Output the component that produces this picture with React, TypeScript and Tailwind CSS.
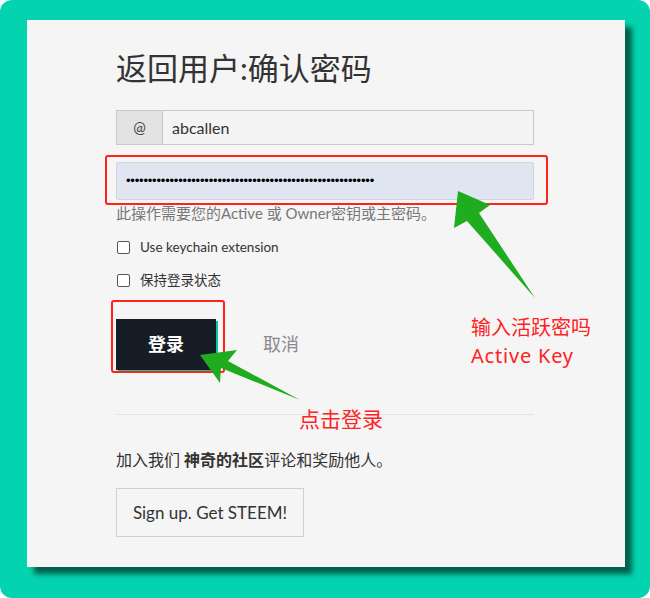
const sans = "font-['Lato','Noto_Sans_CJK_SC',sans-serif]";

function Check({ label }: { label: string }) {
  return (
    <label className="flex h-5 items-center gap-[10px] text-[13.5px] text-[#333]">
      <span className="ml-px h-[13px] w-[13px] rounded-[2px] border border-[#555] bg-white" />
      {label}
    </label>
  );
}

export default function App() {
  return (
    <div className={`relative h-[598px] w-[650px] overflow-hidden rounded-[12px] bg-[#03d3ae] pl-[27px] pt-[20px] ${sans}`}>
      <div className="flex h-[547px] w-[598px] flex-col bg-[#f5f5f5] pl-[89px] pt-[30px] shadow-[7px_7px_5px_#03604b]">
        <h1 className="text-[31px] leading-9 text-[#333]">返回用户:确认密码</h1>

        <div className="mt-[24px] flex h-[35px] w-[418px] border border-[#c8c8c8]">
          <div className="flex w-[46px] items-center justify-center border-r border-[#c8c8c8] bg-[#e3e3e3] text-[15px] text-[#444]">
            @
          </div>
          <div className="flex flex-1 items-center bg-[#f4f4f4] pl-[9px] text-[16px] text-[#333]">abcallen</div>
        </div>

        <div className="mt-[17px] flex h-[38px] w-[418px] items-center rounded-[2px] border border-[#cfd5de] bg-[#dfe5f1] pl-[9px] font-['Liberation_Sans',sans-serif] text-[13px] tracking-[-0.2px] text-black">
          {"•".repeat(57)}
        </div>

        <p className="mt-[3px] text-[15px] leading-5 text-[#777]">此操作需要您的Active 或 Owner密钥或主密码。</p>

        <div className="mt-[14px]">
          <Check label="Use keychain extension" />
        </div>
        <div className="mt-[13px]">
          <Check label="保持登录状态" />
        </div>

        <div className="mt-[29px] flex items-center">
          <button className="flex h-[51px] w-[100px] items-center justify-center bg-[#161d26] text-[18px] font-bold text-white shadow-[2px_2px_0_#06c9a4]">
            登录
          </button>
          <span className="ml-[47px] text-[18px] text-[#8a8a8a]">取消</span>
        </div>

        <div className="mt-[44px] h-px w-[418px] bg-[#e2e2e2]" />

        <p className="mt-[35px] text-[16px] leading-5 text-[#333]">
          加入我们 <b className="font-bold">神奇的社区</b>评论和奖励他人。
        </p>

        <div className="mt-[18px]">
          <button className="h-[49px] w-[188px] border border-[#cfcfcf] text-[17px] text-[#333]">Sign up. Get STEEM!</button>
        </div>
      </div>

      {/* annotations */}
      <div className="absolute left-[105px] top-[155px] h-[50px] w-[443px] rounded-[3px] border-[2.5px] border-[#ff2317]" />
      <div className="absolute left-[111px] top-[300px] h-[73px] w-[114px] rounded-[3px] border-[2.5px] border-[#ff2317]" />

      <svg className="absolute left-0 top-0" width="650" height="598" viewBox="0 0 650 598">
        <polygon points="458,191 490,205 479,213 535,298 467,221 454,228" fill="#1fad1f" />
        <polygon points="200,355 237,350 228,361 300,400 221,368 220,383" fill="#1fad1f" />
      </svg>

      <div className="absolute left-[471px] top-[314px] font-['Noto_Sans','Noto_Sans_CJK_SC',sans-serif] text-[20px] leading-[28px] text-[#ff2222]">
        <div>输入活跃密吗</div>
        <div className="tracking-[0.8px]">Active Key</div>
      </div>
      <div className="absolute left-[299px] top-[404px] font-['Noto_Sans_CJK_SC',sans-serif] text-[21px] leading-[28px] text-[#ff2222]">
        点击登录
      </div>
    </div>
  );
}
